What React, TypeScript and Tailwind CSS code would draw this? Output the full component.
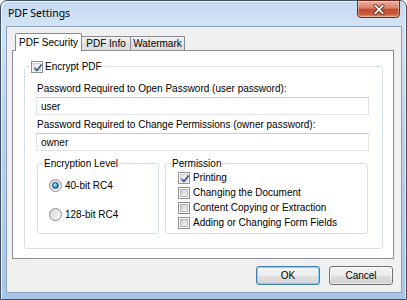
import React from "react";

function Check({ checked }: { checked?: boolean }) {
  return (
    <span className="relative flex w-[12px] h-[12px] shrink-0 border border-[#8e8f8f] bg-white p-[1px]">
      <span
        className={
          checked
            ? "w-full h-full border border-[#c9cdd2] bg-[linear-gradient(135deg,#e9e9e9,#fdfdfd)]"
            : "w-full h-full border border-[#b4b8bd] bg-[linear-gradient(135deg,#cfcfcf,#f4f4f4)]"
        }
      />
      {checked && (
        <svg className="absolute left-0 top-0" width="12" height="12" viewBox="0 0 12 12">
          <path d="M2.6 5.8 L4.9 8.4 L9.6 2.4" stroke="#3d5594" strokeWidth="1.7" fill="none" />
        </svg>
      )}
    </span>
  );
}

function Radio({ checked }: { checked?: boolean }) {
  return (
    <span className="flex items-center justify-center w-[13px] h-[13px] shrink-0 rounded-full border border-[#8e8f8f] bg-[linear-gradient(135deg,#d4d4d4,#fbfbfb)]">
      {checked && (
        <span className="w-[7px] h-[7px] rounded-full border border-[#1a4f73] bg-[radial-gradient(circle_at_40%_35%,#c2f0fd,#3196c9_55%,#0c4a73)]" />
      )}
    </span>
  );
}

function Group({
  legend,
  className,
  children,
}: {
  legend: React.ReactNode;
  className?: string;
  children?: React.ReactNode;
}) {
  return (
    <div className={"flex flex-col rounded-[3px] border border-[#d5dfe5] " + (className ?? "")}>
      <div className="-mt-[7px] ml-[5px] px-[1px] h-[13px] w-fit bg-white flex items-center leading-[13px]">
        {legend}
      </div>
      {children}
    </div>
  );
}

export default function App() {
  return (
    <div className="w-[407px] h-[300px] overflow-hidden bg-white">
      <div className="w-[407px] h-[300px] flex flex-col rounded-t-[7px] border border-[#3f5167] bg-[linear-gradient(180deg,#c3d8ef_0%,#d3e3f4_8%,#bdd3ec_40%,#aac5e5_100%)] pl-[5px] pr-[4px] pb-[6px] text-black shadow-[inset_1px_1px_0_rgba(255,255,255,0.75),inset_-1px_0_0_rgba(255,255,255,0.6)] font-['Liberation_Sans',Arial,sans-serif]">
        {/* Title bar */}
        <div className="h-[25px] flex justify-between items-start">
          <div className="h-[26px] flex items-center pl-[2px] text-[10.5px] text-black font-['Noto_Sans',sans-serif]">
            PDF Settings
          </div>
          <div className="-mt-px mr-[2px] w-[43px] h-[18px] rounded-b-[4px] border border-[#6a2a1e] bg-[linear-gradient(180deg,#eab0a2_0%,#dc8068_45%,#c34a2e_52%,#c85a3d_80%,#e3906c_100%)] flex items-center justify-center shadow-[inset_0_0_0_1px_rgba(255,255,255,0.35)]">
            <svg width="12" height="11" viewBox="0 0 12 11">
              <path d="M2.2 1.6 L9.8 9.4 M9.8 1.6 L2.2 9.4" stroke="#4a1a12" strokeWidth="3.4" strokeLinecap="round" />
              <path d="M2.2 1.6 L9.8 9.4 M9.8 1.6 L2.2 9.4" stroke="#ffffff" strokeWidth="1.9" strokeLinecap="round" />
            </svg>
          </div>
        </div>

        {/* Client area */}
        <div className="h-[267px] flex flex-col border border-[#8ba3c0] bg-[#f0f0f0] pl-[5px] pt-[6px] text-[10px]">
          {/* Tabs */}
          <div className="relative z-10 ml-[3px] h-[17px] flex items-end">
            <div className="h-[18px] -mb-px w-[67px] flex items-center justify-center rounded-t-[2px] border border-b-0 border-[#898c95] bg-white">
              PDF Security
            </div>
            <div className="h-[14px] w-[49px] flex items-center justify-center border border-l-0 border-b-0 border-[#898c95] bg-[linear-gradient(180deg,#f3f3f3,#e6e6e6_50%,#dcdcdc_51%,#e2e2e2)]">
              PDF Info
            </div>
            <div className="h-[14px] w-[54px] flex items-center justify-center border border-l-0 border-b-0 border-[#898c95] bg-[linear-gradient(180deg,#f3f3f3,#e6e6e6_50%,#dcdcdc_51%,#e2e2e2)]">
              Watermark
            </div>
          </div>

          {/* Panel */}
          <div className="w-[382px] h-[209px] flex flex-col border border-[#898c95] bg-white">
            <Group
              className="mt-[15px] ml-[11px] w-[359px]"
              legend={
                <span className="flex items-center gap-[2px]">
                  <Check checked />
                  <span>Encrypt PDF</span>
                </span>
              }
            >
              <div className="flex flex-col pl-[11px] pr-[13px] pb-[14px]">
                <div className="mt-[9px] pl-[1px] h-[13px] leading-[13px]">
                  Password Required to Open Password (user password):
                </div>
                <div className="mt-[2px] h-[18px] flex items-center pl-[4px] border border-[#e0e3e8] border-t-[#c8ccd3] bg-white">
                  user
                </div>
                <div className="mt-[3px] pl-[1px] h-[13px] leading-[13px]">
                  Password Required to Change Permissions (owner password):
                </div>
                <div className="mt-[2px] h-[18px] flex items-center pl-[4px] border border-[#e0e3e8] border-t-[#c8ccd3] bg-white">
                  owner
                </div>
                <div className="mt-[12px] pl-[1px] flex gap-[6px]">
                  <Group className="w-[122px] h-[71px]" legend={<span>Encryption Level</span>}>
                    <div className="flex flex-col pl-[11px]">
                      <div className="mt-[9px] h-[13px] flex items-center gap-[3px]">
                        <Radio checked />
                        <span>40-bit RC4</span>
                      </div>
                      <div className="mt-[16px] h-[13px] flex items-center gap-[3px]">
                        <Radio />
                        <span>128-bit RC4</span>
                      </div>
                    </div>
                  </Group>
                  <Group className="w-[203px] h-[71px]" legend={<span>Permission</span>}>
                    <div className="flex flex-col pl-[12px]">
                      {[
                        ["Printing", true],
                        ["Changing the Document", false],
                        ["Content Copying or Extraction", false],
                        ["Adding or Changing Form Fields", false],
                      ].map(([label, c]) => (
                        <div key={label as string} className="h-[15px] flex items-center gap-[3px]">
                          <Check checked={c as boolean} />
                          <span>{label as string}</span>
                        </div>
                      ))}
                    </div>
                  </Group>
                </div>
              </div>
            </Group>
          </div>

          {/* Buttons */}
          <div className="mt-[7px] flex justify-end gap-[9px] pr-[8px]">
            <button className="w-[64px] h-[19px] flex items-center justify-center rounded-[3px] border border-[#3c7fb1] bg-[linear-gradient(180deg,#f4f4f4,#ececec_50%,#e0e0e0_51%,#d6d6d6)] shadow-[inset_0_0_0_1px_#86d3f6] text-[10px]">
              OK
            </button>
            <button className="w-[64px] h-[19px] flex items-center justify-center rounded-[3px] border border-[#707070] bg-[linear-gradient(180deg,#f2f2f2,#ebebeb_50%,#dddddd_51%,#cfcfcf)] shadow-[inset_0_0_0_1px_rgba(255,255,255,0.6)] text-[10px]">
              Cancel
            </button>
          </div>
        </div>
      </div>
    </div>
  );
}
